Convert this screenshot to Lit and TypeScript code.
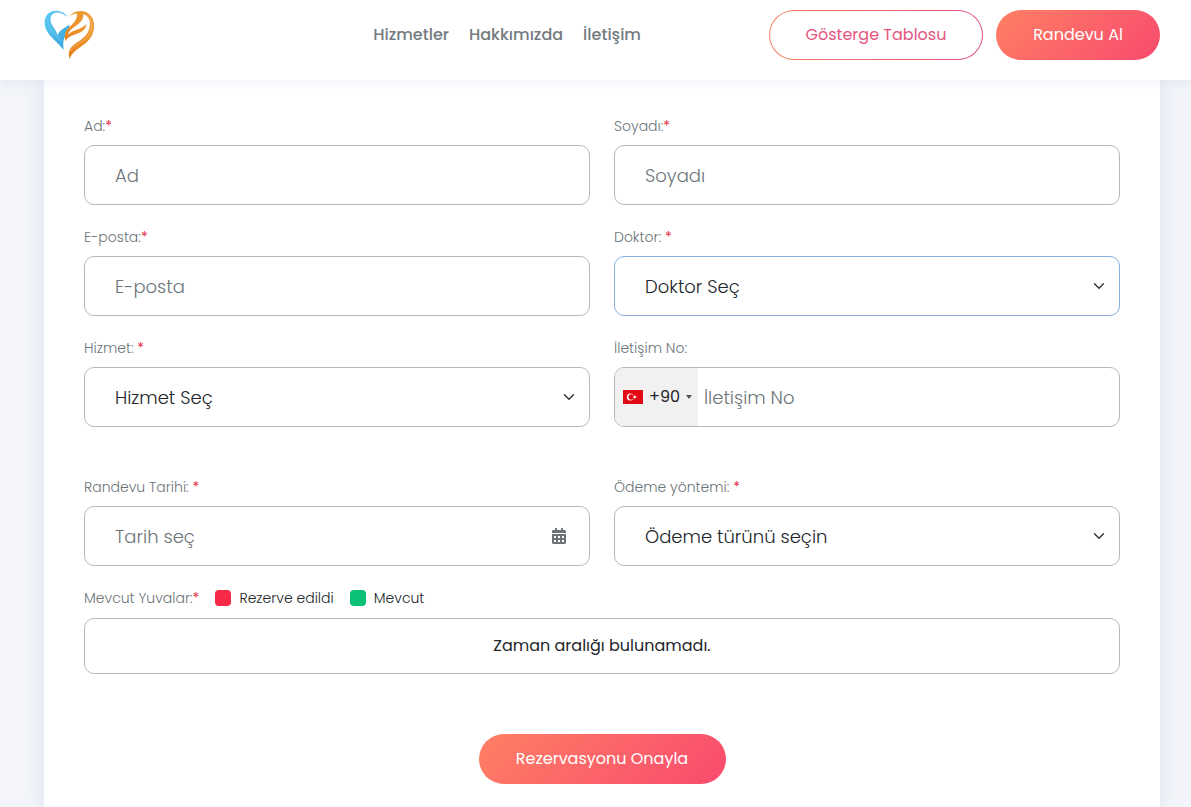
import { LitElement, html, css, svg, nothing, type TemplateResult } from "lit";
import { customElement } from "lit/decorators.js";
import { classMap } from "lit/directives/class-map.js";

interface Field {
  id: string;
  label: string;
  required?: boolean;
}

const chevron = html`<svg class="chevron" viewBox="0 0 16 16" aria-hidden="true">
  <path d="M2 5l6 6 6-6" fill="none" stroke="#343a40" stroke-width="2" stroke-linecap="round" stroke-linejoin="round" />
</svg>`;

const calendar = html`<svg class="calendar" viewBox="0 0 448 512" aria-hidden="true">
  <path
    fill="#6c7277"
    d="M0 464c0 26.500 21.500 48 48 48h352c26.500 0 48-21.500 48-48V192H0v272zm320-196c0-6.600 5.400-12 12-12h40c6.600 0 12 5.400 12 12v40c0 6.600-5.400 12-12 12h-40c-6.600 0-12-5.400-12-12v-40zm0 128c0-6.600 5.400-12 12-12h40c6.600 0 12 5.400 12 12v40c0 6.600-5.400 12-12 12h-40c-6.600 0-12-5.400-12-12v-40zM192 268c0-6.600 5.400-12 12-12h40c6.600 0 12 5.400 12 12v40c0 6.600-5.400 12-12 12h-40c-6.600 0-12-5.400-12-12v-40zm0 128c0-6.600 5.400-12 12-12h40c6.600 0 12 5.400 12 12v40c0 6.600-5.400 12-12 12h-40c-6.600 0-12-5.400-12-12v-40zM64 268c0-6.600 5.400-12 12-12h40c6.600 0 12 5.400 12 12v40c0 6.600-5.400 12-12 12H76c-6.600 0-12-5.400-12-12v-40zm0 128c0-6.600 5.400-12 12-12h40c6.600 0 12 5.400 12 12v40c0 6.600-5.400 12-12 12H76c-6.600 0-12-5.400-12-12v-40zM400 64h-48V16c0-8.800-7.200-16-16-16h-32c-8.800 0-16 7.200-16 16v48H160V16c0-8.800-7.200-16-16-16h-32c-8.800 0-16 7.200-16 16v48H48C21.500 64 0 85.500 0 112v48h448v-48c0-26.500-21.500-48-48-48z"
  />
</svg>`;

const flag = html`<svg class="flag" viewBox="0 0 20 14" aria-hidden="true">
  <rect width="20" height="14" fill="#e30a17" />
  <circle cx="7.300" cy="7" r="3.500" fill="#fff" />
  <circle cx="8.200" cy="7" r="2.700" fill="#e30a17" />
  <path d="M9.600 7l1.500-.5.100-1.500.9 1.200 1.500-.4-.9 1.200.9 1.200-1.500-.4-.9 1.200-.1-1.500z" fill="#fff" />
</svg>`;

const logo = html`<svg class="logo" viewBox="0 0 51 50" role="img" aria-label="Logo">
  <defs>
    <linearGradient id="blue" x1="0" y1="0" x2="1" y2="1">
      <stop offset="0" stop-color="#5bcbf4" />
      <stop offset="1" stop-color="#37a3dc" />
    </linearGradient>
    <linearGradient id="orange" x1="1" y1="0" x2="0" y2="1">
      <stop offset="0" stop-color="#f0a03a" />
      <stop offset="1" stop-color="#e67e16" />
    </linearGradient>
  </defs>
  ${svg`
    <path fill="url(#blue)" d="M23.500 7C20 1.500 13-.5 7.500 1.500C1 4-1 12 2 19C5 27 14 32 19.500 40C19.500 36 18.500 32 20.500 27.500C22 23.500 25.500 20 25.500 14.500C21 18 17 18.500 13.500 25C12 19 7 16 6.500 10C6 5 9.500 2.500 13.500 2.500C17 2.500 20 4.500 23.500 7Z" />
    <path fill="none" stroke="#8fd8f7" stroke-width="0.500" d="M3.500 9C3.500 18 12 24 17.500 32" />
    <path fill="url(#orange)" d="M25 7C28 3 32 .8 37 1C46 1.500 51 9 50 18C49 29 41 34 33 39.500C29 42.500 27 45 25.500 49C24.500 44 24 40.500 28 36.500C33 31.500 41 29 44.500 21C47.500 14 46 6.500 39.500 4C39.500 8 38 11.500 33 15C28.500 18 25 20.500 24 25C28 19.500 37 20 42.500 14C42 20 37 22.500 31 24.500C26 26 23 28 21.500 31C19.500 25 21.500 20.500 26 16.500C30 13 33.500 9 33 3.500C30 3.500 27.500 5 25 7Z" />
    <path fill="none" stroke="#f9d39c" stroke-width="0.500" d="M43 4.500C50 11 48.500 22 43 27.500C37 33 29 35.500 26.500 41" />
  `}
</svg>`;

@customElement("app-root")
export class AppRoot extends LitElement {
  static styles = css`
    :host {
      display: block;
      min-height: 100vh;
      background: #f3f5fa;
      color: #212529;
      font-family: Poppins, Inter, "Open Sans", sans-serif;
      font-size: 16px;
      line-height: 24px;
    }
    *,
    *::before,
    *::after {
      box-sizing: border-box;
    }
    button,
    input,
    select {
      margin: 0;
      font: inherit;
      color: inherit;
    }
    .header {
      position: sticky;
      top: 0;
      z-index: 1;
      display: grid;
      grid-template-columns: 1fr auto 1fr;
      align-items: center;
      height: 80px;
      padding: 0 31px 10px 44px;
      background: #fff;
      box-shadow: 0 4px 10px rgba(80, 100, 150, 0.08);
    }
    .brand {
      justify-self: start;
      display: block;
    }
    .logo {
      display: block;
      width: 51px;
      height: 50px;
      overflow: visible;
    }
    .nav {
      display: flex;
      gap: 20px;
      margin-right: 128px;
    }
    .nav a {
      color: #747b7f;
      font-weight: 500;
      text-decoration: none;
    }
    .actions {
      justify-self: end;
      display: flex;
      gap: 13px;
    }
    .btn {
      height: 50px;
      border: 1px solid transparent;
      border-radius: 25px;
      white-space: nowrap;
      color: #fff;
      font-weight: 400;
      background: linear-gradient(135deg, #ff8064, #f84a6e) border-box;
    }
    .btn-dashboard {
      min-width: 214px;
      color: #e4567f;
      background:
        linear-gradient(#fff, #fff) padding-box,
        linear-gradient(110deg, #f5855f, #dc4c7c) border-box;
    }
    .btn-book {
      min-width: 164px;
    }
    .btn-submit {
      min-width: 247px;
      justify-self: center;
      margin-top: 60px;
    }
    .page {
      padding: 0 31px 0 44px;
    }
    .card {
      display: grid;
      min-height: calc(100vh - 80px);
      align-content: start;
      padding: 36px 40px 24px;
      background: #fff;
      box-shadow: 0 0 20px rgba(60, 80, 130, 0.12);
    }
    .fields {
      display: grid;
      grid-template-columns: 1fr 1fr;
      gap: 22px 24px;
    }
    .fields + .fields {
      margin-top: 50px;
    }
    .field {
      display: grid;
      gap: 8px;
      min-width: 0;
    }
    .label {
      color: #6c7579;
      font-size: 14px;
      font-weight: 300;
      line-height: 21px;
    }
    .star {
      color: #e62f49;
      font-weight: 400;
    }
    .box {
      display: grid;
      grid-template-columns: minmax(0, 1fr);
      align-items: center;
      height: 60px;
      border: 1px solid #b6b9bc;
      border-radius: 10px;
      background: #fff;
      overflow: hidden;
      font-size: 18px;
      font-weight: 300;
    }
    .box.active {
      border-color: #86b0e2;
    }
    .box > * {
      grid-row: 1;
      grid-column: 1;
    }
    .control {
      width: 100%;
      height: 100%;
      padding: 0 30px;
      border: 0;
      outline: 0;
      background: none;
      appearance: none;
    }
    select.control {
      padding-top: 2px;
    }
    .control::placeholder {
      color: #6c7579;
      opacity: 1;
    }
    .chevron {
      justify-self: end;
      width: 12px;
      height: 12px;
      margin-right: 14px;
      pointer-events: none;
    }
    .calendar {
      justify-self: end;
      width: 14px;
      height: 16px;
      margin-right: 23px;
      pointer-events: none;
    }
    .box.phone {
      grid-template-columns: 83px minmax(0, 1fr);
    }
    .phone .control {
      grid-column: 2;
      padding: 0 6px;
    }
    .dial {
      display: flex;
      align-items: center;
      gap: 6px;
      height: 100%;
      padding: 0 5px 0 8px;
      border: 0;
      background: #f1f1f1;
      font-size: 16px;
      font-weight: 400;
    }
    .flag {
      width: 20px;
      height: 14px;
      flex: none;
    }
    .arrow {
      border: 3px solid transparent;
      border-top: 4px solid #555;
      border-bottom: 0;
    }
    .legend {
      display: flex;
      align-items: center;
      gap: 16px;
      margin-top: 22px;
      font-size: 14px;
      font-weight: 300;
      line-height: 20px;
    }
    .legend .label {
      line-height: 20px;
    }
    .key {
      display: flex;
      align-items: center;
      gap: 8px;
    }
    .swatch {
      width: 16px;
      height: 16px;
      border-radius: 4px;
      background: #f62947;
    }
    .swatch.free {
      background: #0ac074;
    }
    .slots {
      margin-top: 10px;
      padding: 15px;
      border: 1px solid #b6b9bc;
      border-radius: 10px;
      text-align: center;
    }
  `;

  private label(f: Field, gap = true) {
    return html`<label class="label" for=${f.id}
      >${f.label}${f.required ? html`${gap ? " " : nothing}<span class="star">*</span>` : nothing}</label
    >`;
  }

  private text(f: Field, placeholder: string, type = "text", icon: TemplateResult | typeof nothing = nothing, gap = false) {
    return html`<div class="field">
      ${this.label(f, gap)}
      <div class="box"><input class="control" id=${f.id} type=${type} placeholder=${placeholder} />${icon}</div>
    </div>`;
  }

  private select(f: Field, option: string, active = false) {
    return html`<div class="field">
      ${this.label(f)}
      <div class=${classMap({ box: true, active })}>
        <select class="control" id=${f.id}>
          <option>${option}</option>
        </select>
        ${chevron}
      </div>
    </div>`;
  }

  render() {
    return html`
      <header class="header">
        <a class="brand" href="#">${logo}</a>
        <nav class="nav">
          <a href="#">Hizmetler</a>
          <a href="#">Hakkımızda</a>
          <a href="#">İletişim</a>
        </nav>
        <div class="actions">
          <button class="btn btn-dashboard" type="button">Gösterge Tablosu</button>
          <button class="btn btn-book" type="button">Randevu Al</button>
        </div>
      </header>
      <main class="page">
        <form class="card" @submit=${(e: Event) => e.preventDefault()}>
          <div class="fields">
            ${this.text({ id: "first", label: "Ad:", required: true }, "Ad")}
            ${this.text({ id: "last", label: "Soyadı:", required: true }, "Soyadı")}
            ${this.text({ id: "email", label: "E-posta:", required: true }, "E-posta", "email")}
            ${this.select({ id: "doctor", label: "Doktor:", required: true }, "Doktor Seç", true)}
            ${this.select({ id: "service", label: "Hizmet:", required: true }, "Hizmet Seç")}
            <div class="field">
              ${this.label({ id: "phone", label: "İletişim No:" })}
              <div class="box phone">
                <button class="dial" type="button">${flag}<span>+90</span><span class="arrow"></span></button>
                <input class="control" id="phone" type="tel" placeholder="İletişim No" />
              </div>
            </div>
          </div>
          <div class="fields">
            ${this.text({ id: "date", label: "Randevu Tarihi:", required: true }, "Tarih seç", "text", calendar, true)}
            ${this.select({ id: "payment", label: "Ödeme yöntemi:", required: true }, "Ödeme türünü seçin")}
          </div>
          <div class="legend">
            <span class="label">Mevcut Yuvalar:<span class="star">*</span></span>
            <span class="key"><span class="swatch"></span>Rezerve edildi</span>
            <span class="key"><span class="swatch free"></span>Mevcut</span>
          </div>
          <div class="slots">Zaman aralığı bulunamadı.</div>
          <button class="btn btn-submit" type="submit">Rezervasyonu Onayla</button>
        </form>
      </main>
    `;
  }
}
